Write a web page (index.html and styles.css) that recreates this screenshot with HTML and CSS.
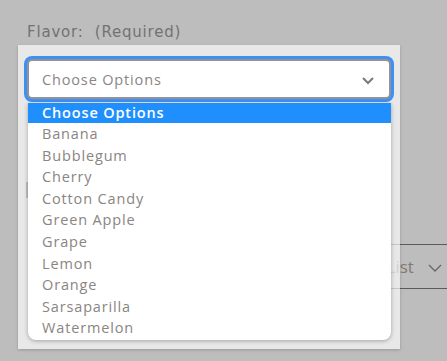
FILE: index.html
```html
<!DOCTYPE html>
<html>
<head>
<meta charset="utf-8">
<link rel="stylesheet" href="styles.css">
</head>
<body>
<div class="page">
  <div class="label">Flavor:&nbsp; (Required)</div>
  <div class="select-spacer"></div>
  <div class="qty"></div>
  <div class="actions">
    <div class="cart"></div>
    <div class="wish"><span class="wish-text">Add to Wish List</span>
      <svg class="wish-chev" width="14" height="10" viewBox="0 0 14 10"><path d="M1 2 L7 8 L13 2" fill="none" stroke="#666" stroke-width="1.3"/></svg>
    </div>
  </div>

  <div class="popup">
    <div class="select">
      <span class="select-text">Choose Options</span>
      <svg class="chev" width="14" height="9" viewBox="0 0 14 9"><path d="M2 2 L7 7 L12 2" fill="none" stroke="#7a7a7a" stroke-width="2"/></svg>
    </div>
    <ul class="list">
      <li class="opt selected">Choose Options</li>
      <li class="opt">Banana</li>
      <li class="opt">Bubblegum</li>
      <li class="opt">Cherry</li>
      <li class="opt">Cotton Candy</li>
      <li class="opt">Green Apple</li>
      <li class="opt">Grape</li>
      <li class="opt">Lemon</li>
      <li class="opt">Orange</li>
      <li class="opt">Sarsaparilla</li>
      <li class="opt">Watermelon</li>
    </ul>
  </div>
</div>
</body>
</html>
```
FILE: styles.css
```css
html, body {
  margin: 0;
  padding: 0;
  background: #bdbdbd;
  overflow: hidden;
}
.page {
  position: relative;
  width: 447px;
  height: 361px;
  padding: 22px 0 0 26px;
  box-sizing: border-box;
  overflow: hidden;
}
.label {
  font-family: "DejaVu Sans", sans-serif;
  font-size: 15px;
  color: #727272;
  line-height: 20px;
  letter-spacing: 0.8px;
  margin-left: 1px;
}
.select-spacer {
  height: 140px;
}
.qty {
  width: 120px;
  height: 16px;
  border-left: 2px solid #4a4a4a;
}
.actions {
  display: flex;
  margin-top: 46px;
  height: 44px;
}
.cart {
  width: 2px;
  height: 48px;
  background: #4a4a4a;
}
.wish {
  margin-left: 257px;
  padding-left: 4px;
  width: 200px;
  flex: none;
  height: 45px;
  border-top: 1px solid #5a5a5a;
  border-bottom: 1px solid #5a5a5a;
  box-sizing: border-box;
  font-family: "Open Sans", sans-serif;
  font-size: 17px;
  color: #857a72;
  display: flex;
  align-items: center;
  white-space: nowrap;
}
.wish-chev {
  margin-left: 14px;
  margin-top: 2px;
}
.popup {
  position: absolute;
  left: 18px;
  top: 45px;
  width: 382px;
  height: 304px;
  box-sizing: border-box;
  padding: 14px 9px 9px 9px;
  background: rgba(255,255,255,0.65);
  box-shadow: 0 1px 3px rgba(0,0,0,0.2);
}
.select {
  height: 40px;
  box-sizing: border-box;
  border: 2px solid #939393;
  border-radius: 5px;
  background: #fff;
  box-shadow: 0 0 0 3px #3f90f6;
  display: flex;
  align-items: center;
  justify-content: space-between;
  padding: 0 14px 0 13px;
  font-family: "Open Sans", sans-serif;
  font-size: 14.5px;
  letter-spacing: 0.85px;
  color: #8a8683;
}
.chev {
  margin-top: 2px;
}
.list {
  list-style: none;
  margin: 4px 0 0 1px;
  padding: 0;
  width: 363px;
  height: 237px;
  background: #fff;
  border-radius: 0 0 8px 8px;
  box-shadow: 0 1px 4px rgba(0,0,0,0.3);
  overflow: hidden;
  font-family: "Open Sans", sans-serif;
  font-size: 14.5px;
  letter-spacing: 0.85px;
  color: #8a8581;
}
.opt {
  height: 21.6px;
  line-height: 21.6px;
  padding-left: 14px;
  white-space: nowrap;
}
.selected {
  background: #1e8ffc;
  color: #fff;
  font-weight: 600;
  height: 20px;
  line-height: 19px;
}
```
